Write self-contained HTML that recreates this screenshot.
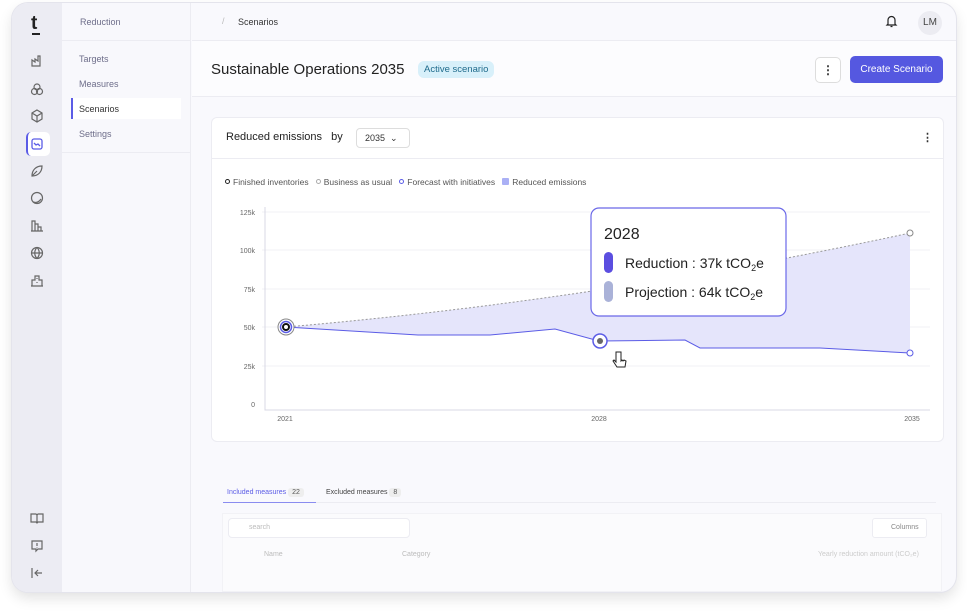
<!DOCTYPE html>
<html><head><style>
*{box-sizing:border-box;margin:0;padding:0}
body{width:967px;height:612px;background:#fff;font-family:"Liberation Sans",sans-serif;position:relative;overflow:hidden}
.win{position:absolute;left:12px;top:3px;width:944px;height:589px;border-radius:16px;overflow:hidden;background:#f9f9fd;box-shadow:0 0 0 1px #e4e4ec,0 6px 14px rgba(0,0,0,.12)}
.rail{position:absolute;left:0;top:0;width:50px;height:100%;background:#ececf3}
.nav2{position:absolute;left:50px;top:0;width:129px;height:100%;background:#f8f8fc;border-right:1px solid #ececf2}
.t{position:absolute;font-size:9px;color:#6e6e8a}
.ic{position:absolute;left:17px;width:16px;height:16px}
.lg{display:inline-block;width:5px;height:5px;border-radius:3px;border:1.2px solid #222;margin-right:3px;vertical-align:1px}
</style></head><body>
<div class="win">
 <div class="rail">
  <div style="position:absolute;left:19px;top:10px;font-size:19px;font-weight:bold;color:#222">t</div>
  <div style="position:absolute;left:20px;top:30px;width:8px;height:1.5px;background:#222"></div>
  <svg class="ic" style="top:50px" viewBox="0 0 16 16" fill="none" stroke="#666" stroke-width="1.2"><path d="M3 13V7l3 2V6l3 2V3h2v10z"/></svg>
  <svg class="ic" style="top:78px" viewBox="0 0 16 16" fill="none" stroke="#666" stroke-width="1.2"><circle cx="8" cy="6" r="3"/><circle cx="5.5" cy="10.5" r="3"/><circle cx="10.5" cy="10.5" r="3"/></svg>
  <svg class="ic" style="top:105px" viewBox="0 0 16 16" fill="none" stroke="#666" stroke-width="1.2"><path d="M8 2l5 3v6l-5 3-5-3V5zM3 5l5 3 5-3M8 8v6"/></svg>
  <div style="position:absolute;left:14px;top:129px;width:24px;height:24px;background:#fff;border-radius:5px;border-left:2px solid #5b5ce6"></div>
  <svg class="ic" style="top:133px" viewBox="0 0 16 16" fill="none" stroke="#5b5ce6" stroke-width="1.3"><rect x="3" y="3" width="10" height="10" rx="2"/><path d="M5 7l2 2 2-1 2 2"/></svg>
  <svg class="ic" style="top:160px" viewBox="0 0 16 16" fill="none" stroke="#666" stroke-width="1.2"><path d="M3 13C3 7 7 3 13 3c0 6-4 10-10 10zM3 13l5-5"/></svg>
  <svg class="ic" style="top:187px" viewBox="0 0 16 16" fill="none" stroke="#666" stroke-width="1.2"><circle cx="8" cy="8" r="5.5"/><path d="M4 12c3 1 6 0 8-3"/></svg>
  <svg class="ic" style="top:215px" viewBox="0 0 16 16" fill="none" stroke="#666" stroke-width="1.2"><path d="M3 13V3h3v10M6 6h3v7M9 9h3v4M2 13h12"/></svg>
  <svg class="ic" style="top:242px" viewBox="0 0 16 16" fill="none" stroke="#666" stroke-width="1.2"><circle cx="8" cy="8" r="5.5"/><path d="M2.5 8h11M8 2.5c-3 3-3 8 0 11M8 2.5c3 3 3 8 0 11"/></svg>
  <svg class="ic" style="top:270px" viewBox="0 0 16 16" fill="none" stroke="#666" stroke-width="1.2"><path d="M3 13V7h3V3h4v4h3v6zM2 13h12M8 5v1M8 9v1"/></svg>
  <svg class="ic" style="top:507px" viewBox="0 0 16 16" fill="none" stroke="#666" stroke-width="1.2"><path d="M2 4h5l1 1 1-1h5v8H9l-1 1-1-1H2zM8 5v8"/></svg>
  <svg class="ic" style="top:535px" viewBox="0 0 16 16" fill="none" stroke="#666" stroke-width="1.2"><path d="M3 3h10v8H9l-2 2v-2H3zM8 5v3M8 9.5v.5"/></svg>
  <svg class="ic" style="top:562px" viewBox="0 0 16 16" fill="none" stroke="#666" stroke-width="1.2"><path d="M3 3v10M13 8H6M9 5L6 8l3 3"/></svg>
 </div>
 <div class="nav2">
  <div class="t" style="left:18px;top:14px">Reduction</div>
  <div style="position:absolute;left:0;top:37px;width:129px;border-top:1px solid #ececf2"></div>
  <div class="t" style="left:17px;top:51px">Targets</div>
  <div class="t" style="left:17px;top:76px">Measures</div>
  <div style="position:absolute;left:9px;top:95px;width:110px;height:21px;background:#fff;border-left:2px solid #5b5ce6"></div>
  <div class="t" style="left:17px;top:101px;color:#333">Scenarios</div>
  <div class="t" style="left:17px;top:126px">Settings</div>
  <div style="position:absolute;left:0;top:149px;width:129px;border-top:1px solid #ececf2"></div>
 </div>
 <div style="position:absolute;left:180px;top:37px;right:0;border-top:1px solid #ececf2"></div>
 <div class="t" style="left:210px;top:13px;color:#bbb">/</div>
 <div class="t" style="left:226px;top:14px;color:#333">Scenarios</div>
 <svg style="position:absolute;left:873px;top:11px" width="13" height="14" viewBox="0 0 13 14" fill="none" stroke="#222" stroke-width="1.2"><path d="M3 10V6a3.5 3.5 0 017 0v4l1 1H2zM5.5 12.5h2"/></svg>
 <div style="position:absolute;left:906px;top:8px;width:24px;height:24px;border-radius:12px;background:#ececf2;font-size:10px;color:#444;text-align:center;line-height:24px">LM</div>
 <div style="position:absolute;left:180px;top:38px;right:0;height:56px;background:#fcfcfe;border-bottom:1px solid #ececf2"></div>
 <div style="position:absolute;left:199px;top:58px;font-size:15px;color:#222">Sustainable Operations 2035</div>
 <div style="position:absolute;left:406px;top:58px;height:17px;padding:0 6px;border-radius:6px;background:#d8f0fa;color:#1f6b8c;font-size:9.5px;line-height:17px">Active scenario</div>
 <div style="position:absolute;left:803px;top:54px;width:26px;height:26px;border:1px solid #ddd;border-radius:5px;background:#fff;text-align:center;font-size:12px;line-height:24px;font-weight:bold;color:#333">⋮</div>
 <div style="position:absolute;left:838px;top:53px;width:93px;height:27px;border-radius:5px;background:#5558e0;color:#fff;font-size:10px;text-align:center;line-height:27px">Create Scenario</div>
 <div style="position:absolute;left:199px;top:114px;width:733px;height:325px;background:#fff;border:1px solid #ececf2;border-radius:6px"></div>
 <div style="position:absolute;left:199px;top:155px;width:733px;border-top:1px solid #ececf2"></div>
 <div style="position:absolute;left:214px;top:128px;font-size:11px;color:#222">Reduced emissions &nbsp; by</div>
 <div style="position:absolute;left:344px;top:125px;width:54px;height:20px;border:1px solid #ddd;border-radius:4px;font-size:9px;color:#333;line-height:18px;padding-left:8px">2035 &nbsp;⌄</div>
 <div style="position:absolute;left:910px;top:128px;font-size:11px;font-weight:bold;color:#333">⋮</div>
 <div class="t" style="left:213px;top:174px;font-size:8.5px;color:#555"><span class="lg"></span>Finished inventories &nbsp;&nbsp;<span class="lg" style="border-color:#aaa"></span>Business as usual &nbsp;&nbsp;<span class="lg" style="border-color:#5b5ce6"></span>Forecast with initiatives &nbsp;&nbsp;<span style="display:inline-block;width:7px;height:7px;background:#aab0f5;border-radius:1px;margin-right:3px;vertical-align:0"></span>Reduced emissions</div>
 <svg style="position:absolute;left:-12px;top:-3px" width="967" height="612" viewBox="0 0 967 612">
  <g font-family="Liberation Sans" font-size="7" fill="#666" text-anchor="end">
   <text x="255" y="215">125k</text><text x="255" y="253">100k</text><text x="255" y="292">75k</text><text x="255" y="330">50k</text><text x="255" y="369">25k</text><text x="255" y="407">0</text>
  </g>
  <g stroke="#f2f2f6"><path d="M262 212H930M262 250H930M262 289H930M262 327H930M262 366H930"/></g>
  <path d="M265 207V410H930" stroke="#d8d8e4" fill="none"/>
  <g font-family="Liberation Sans" font-size="7" fill="#666" text-anchor="middle"><text x="285" y="421">2021</text><text x="599" y="421">2028</text><text x="912" y="421">2035</text></g>
  <path d="M286 327Q600 300 910 233L910 353L820 348L700 348L685 340L599 341L555 329L490 335L418 335Z" fill="#e5e5fb"/>
  <path d="M286 327Q600 300 910 233" stroke="#999" stroke-dasharray="2 2" fill="none"/>
  <path d="M286 327L418 335L490 335L555 329L599 341L685 340L700 348L820 348L910 353" stroke="#5b5ce6" fill="none"/>
  <circle cx="286" cy="327" r="8" fill="#fff" stroke="#888"/><circle cx="286" cy="327" r="5.5" fill="#fff" stroke="#5b5ce6" stroke-width="1.5"/><circle cx="286" cy="327" r="3" fill="#fff" stroke="#111" stroke-width="2"/>
  <circle cx="600" cy="341" r="7" fill="#fff" stroke="#5b5ce6" stroke-width="1.5"/><circle cx="600" cy="341" r="3" fill="#666"/>
  <circle cx="910" cy="233" r="3" fill="#fff" stroke="#888"/><circle cx="910" cy="353" r="3" fill="#fff" stroke="#5b5ce6"/>
  <path d="M616 352v10l-2-2-1 1 4 6h8l1-6-2-1-1 1-1-1-1 1v-2-7z" fill="#fff" stroke="#222" stroke-width="1"/>
  <rect x="591" y="208" width="195" height="108" rx="8" fill="#fff" stroke="#6a68e8" stroke-width="1.2"/>
  <text x="604" y="239" font-family="Liberation Sans" font-size="16" fill="#222">2028</text>
  <rect x="604" y="252" width="9" height="21" rx="4.5" fill="#5b4ee0"/>
  <rect x="604" y="281" width="9" height="21" rx="4.5" fill="#aab2d8"/>
  <text x="625" y="268" font-family="Liberation Sans" font-size="14" fill="#222">Reduction : 37k tCO<tspan font-size="9" dy="3">2</tspan><tspan dy="-3">e</tspan></text>
  <text x="625" y="297" font-family="Liberation Sans" font-size="14" fill="#222">Projection : 64k tCO<tspan font-size="9" dy="3">2</tspan><tspan dy="-3">e</tspan></text>
 </svg>
 <div class="t" style="left:215px;top:486px;font-size:7px;color:#5b5ce6">Included measures <span style="background:#eee;color:#555;padding:1px 4px;border-radius:3px">22</span></div>
 <div class="t" style="left:314px;top:486px;font-size:7px;color:#444">Excluded measures <span style="background:#eee;color:#555;padding:1px 4px;border-radius:3px">8</span></div>
 <div style="position:absolute;left:211px;top:499px;width:93px;border-top:1.5px solid #8a8cf0"></div>
 <div style="position:absolute;left:304px;top:499px;width:620px;border-top:1px solid #ececf2"></div>
 <div style="position:absolute;left:210px;top:510px;width:720px;height:79px;background:#fbfbfd;border:1px solid #f2f2f6"></div>
 <div style="position:absolute;left:216px;top:515px;width:182px;height:20px;background:#fff;border:1px solid #ececf2;border-radius:4px;font-size:7px;color:#bbb;line-height:18px;padding-left:20px">search</div>
 <div style="position:absolute;left:860px;top:515px;width:55px;height:20px;background:#fff;border:1px solid #ececf2;border-radius:3px;font-size:7px;color:#888;line-height:18px;padding-left:18px">Columns</div>
 <div class="t" style="left:252px;top:548px;font-size:7px;color:#bbb">Name</div>
 <div class="t" style="left:390px;top:548px;font-size:7px;color:#bbb">Category</div>
 <div class="t" style="left:806px;top:548px;font-size:7px;color:#ccc">Yearly reduction amount (tCO₂e)</div>
</div>
</body></html>
